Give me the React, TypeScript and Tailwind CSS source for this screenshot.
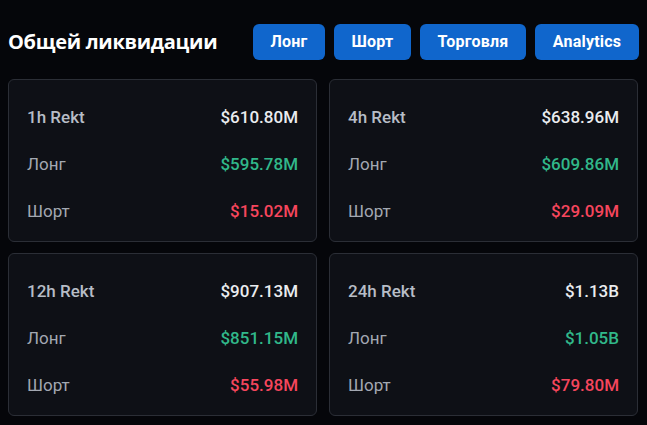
import React from "react";

const cards = [
  { label: "1h Rekt", total: "$610.80M", long: "$595.78M", short: "$15.02M" },
  { label: "4h Rekt", total: "$638.96M", long: "$609.86M", short: "$29.09M" },
  { label: "12h Rekt", total: "$907.13M", long: "$851.15M", short: "$55.98M" },
  { label: "24h Rekt", total: "$1.13B", long: "$1.05B", short: "$79.80M" },
];

const tabs = [
  { name: "Лонг", w: "w-[72px]" },
  { name: "Шорт", w: "w-[77px]" },
  { name: "Торговля", w: "w-[106px]" },
  { name: "Analytics", w: "w-[104px]" },
];

const App = () => {
  return (
    <div className="w-[647px] h-[425px] bg-[#05060a] px-2 pt-6 font-['Roboto',sans-serif]">
      <div className="flex items-center h-9">
        <h1 className="text-[20px] font-bold text-white tracking-[-0.3px] font-['Open_Sans',sans-serif]">
          Общей ликвидации
        </h1>
        <div className="ml-auto flex gap-[9px]">
          {tabs.map((t) => (
            <button
              key={t.name}
              className={`${t.w} h-9 rounded-md bg-[#1066cc] text-white text-[16px] font-bold tracking-[0.2px]`}
            >
              {t.name}
            </button>
          ))}
        </div>
      </div>
      <div className="grid grid-cols-2 gap-x-3 gap-y-[11px] mt-[19px] w-[630px]">
        {cards.map((c) => (
          <div
            key={c.label}
            className="h-[163px] rounded-md border border-[#2b2e36] bg-[#0e1016] px-[18px] pt-[24px] flex flex-col gap-[19px] text-[17px]"
          >
            <div className="flex justify-between h-[28px] items-center">
              <span className="text-[#b7bdc6] font-medium">{c.label}</span>
              <span className="text-[#eaecef] font-medium">{c.total}</span>
            </div>
            <div className="flex justify-between h-[28px] items-center">
              <span className="text-[#a3a8b1]">Лонг</span>
              <span className="text-[#31b88a] font-medium">{c.long}</span>
            </div>
            <div className="flex justify-between h-[28px] items-center">
              <span className="text-[#a3a8b1]">Шорт</span>
              <span className="text-[#f6465d] font-medium">{c.short}</span>
            </div>
          </div>
        ))}
      </div>
    </div>
  );
};

export default App;
